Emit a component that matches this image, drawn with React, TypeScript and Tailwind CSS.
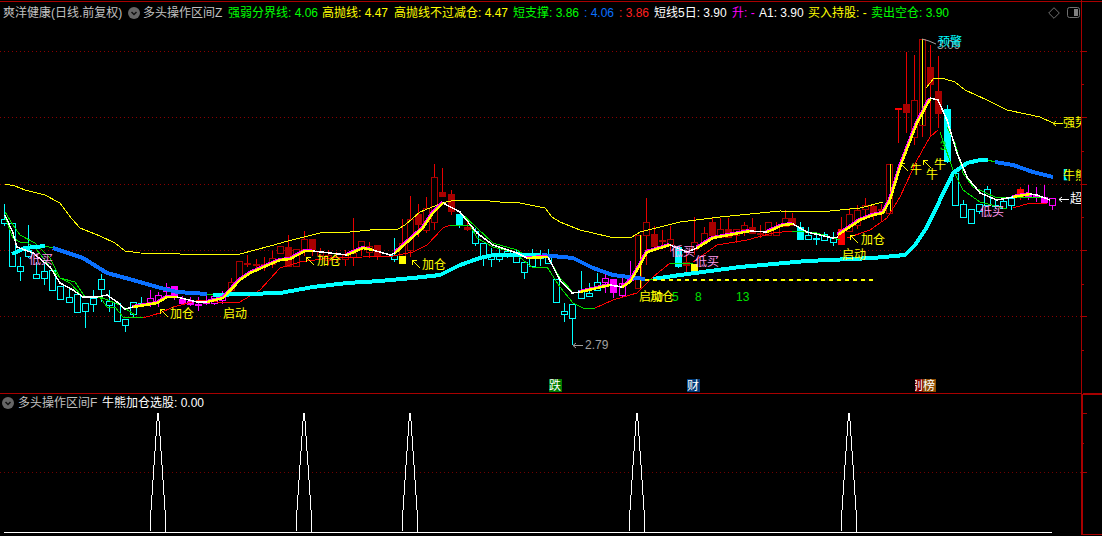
type Candle = [number, number, number, number, number, string];
type Pt = [number, number];

// x, body top, body bottom, high, low, kind (c/C cyan, r/R red, m/M magenta, b bright red)
const candles: Candle[] = [
  [4, 219, 223, 204, 226, "c"], [12, 223, 266, 223, 267, "c"], [20, 266, 271, 257, 281, "c"], [28, 250, 256, 225, 258, "c"],
  [36, 274, 278, 262, 279, "c"], [44, 271, 278, 263, 285, "c"], [52, 270, 290, 270, 291, "c"], [60, 286, 299, 286, 300, "c"],
  [69, 297, 302, 288, 303, "c"], [77, 294, 312, 294, 312, "c"], [85, 303, 311, 303, 328, "c"], [93, 298, 304, 290, 312, "c"],
  [101, 279, 289, 274, 302, "c"], [109, 301, 305, 290, 312, "c"], [117, 303, 321, 303, 321, "c"], [125, 319, 325, 319, 332, "c"],
  [133, 302, 314, 302, 318, "c"], [141, 303, 304, 297, 307, "c"], [150, 298, 302, 290, 307, "m"], [158, 295, 301, 292, 307, "m"],
  [166, 287, 291, 283, 298, "m"], [174, 286, 296, 286, 300, "M"], [182, 299, 303, 296, 305, "M"], [190, 301, 304, 297, 306, "M"],
  [198, 304, 305, 297, 311, "m"], [206, 301, 303, 293, 305, "m"], [214, 296, 303, 294, 305, "m"], [222, 295, 300, 291, 304, "m"],
  [231, 282, 290, 278, 296, "r"], [239, 261, 279, 261, 280, "r"], [247, 263, 264, 255, 267, "r"], [256, 264, 265, 259, 271, "r"],
  [264, 264, 265, 257, 271, "r"], [272, 258, 264, 251, 268, "r"], [280, 246, 253, 246, 254, "r"], [288, 247, 266, 235, 266, "R"],
  [296, 249, 266, 249, 266, "r"], [304, 239, 249, 231, 256, "r"], [312, 239, 249, 239, 256, "R"], [320, 252, 255, 248, 259, "r"],
  [328, 255, 260, 250, 265, "r"], [336, 257, 259, 252, 262, "r"], [345, 255, 259, 250, 266, "r"], [353, 253, 257, 218, 266, "r"],
  [361, 241, 248, 241, 256, "r"], [369, 246, 252, 242, 258, "r"], [377, 245, 255, 245, 260, "R"], [394, 255, 259, 238, 262, "c"],
  [402, 243, 256, 219, 256, "r"], [410, 219, 250, 196, 257, "r"], [418, 214, 224, 204, 237, "R"], [426, 208, 230, 197, 233, "r"],
  [434, 177, 222, 164, 230, "r"], [442, 192, 196, 168, 197, "R"], [451, 194, 211, 190, 215, "R"], [459, 214, 225, 214, 228, "C"],
  [467, 227, 229, 222, 231, "R"], [475, 231, 243, 228, 246, "c"], [483, 243, 258, 243, 266, "c"], [491, 255, 259, 248, 267, "c"],
  [499, 253, 259, 249, 262, "c"], [507, 251, 254, 250, 258, "c"], [516, 252, 262, 250, 263, "c"], [524, 262, 272, 262, 279, "c"],
  [532, 257, 266, 249, 267, "c"], [540, 257, 258, 250, 266, "c"], [548, 254, 263, 249, 264, "c"], [556, 279, 302, 279, 302, "c"],
  [564, 311, 314, 303, 322, "c"], [572, 304, 318, 304, 345, "c"], [581, 290, 298, 271, 298, "c"], [589, 293, 296, 283, 296, "c"],
  [597, 282, 290, 273, 291, "c"], [605, 278, 282, 273, 293, "m"], [613, 279, 292, 279, 298, "M"], [622, 283, 295, 277, 298, "m"],
  [630, 275, 280, 261, 281, "M"], [638, 235, 288, 235, 288, "r"], [646, 222, 235, 198, 265, "r"], [654, 234, 246, 226, 250, "R"],
  [662, 240, 241, 230, 248, "r"], [670, 239, 244, 226, 252, "r"], [678, 247, 266, 247, 268, "C"], [686, 262, 265, 253, 272, "R"],
  [694, 242, 249, 217, 255, "r"], [704, 233, 242, 227, 245, "r"], [712, 222, 235, 218, 235, "R"], [720, 229, 237, 218, 238, "r"],
  [728, 229, 237, 218, 238, "R"], [736, 229, 235, 229, 243, "r"], [744, 225, 229, 222, 236, "r"], [752, 227, 233, 218, 233, "R"],
  [760, 233, 234, 225, 238, "r"], [768, 222, 235, 222, 236, "r"], [776, 227, 235, 222, 235, "r"], [785, 218, 226, 210, 226, "r"],
  [792, 218, 225, 213, 226, "R"], [800, 227, 239, 222, 239, "C"], [808, 235, 239, 227, 240, "c"], [816, 238, 239, 232, 245, "c"],
  [824, 234, 240, 232, 241, "c"], [833, 238, 242, 232, 246, "c"], [841, 229, 244, 217, 244, "b"], [849, 214, 231, 208, 231, "r"],
  [857, 210, 225, 205, 229, "r"], [865, 205, 209, 198, 215, "r"], [873, 206, 213, 204, 220, "R"], [881, 209, 210, 204, 222, "r"],
  [889, 164, 213, 164, 213, "r"], [898, 108, 109, 108, 143, "b"], [906, 104, 112, 52, 133, "R"], [914, 100, 137, 55, 145, "r"],
  [922, 39, 125, 39, 137, "r"], [930, 67, 84, 45, 137, "R"], [938, 91, 113, 56, 128, "R"], [947, 109, 161, 105, 163, "C"],
  [955, 173, 205, 173, 205, "c"], [963, 204, 217, 200, 217, "c"], [971, 209, 223, 209, 223, "c"], [979, 204, 211, 204, 214, "c"],
  [987, 189, 205, 186, 205, "c"], [995, 205, 206, 199, 209, "c"], [1003, 201, 208, 197, 208, "c"], [1011, 198, 205, 196, 210, "c"],
  [1020, 189, 196, 187, 200, "b"], [1028, 195, 196, 185, 200, "m"], [1036, 195, 196, 187, 202, "m"], [1044, 197, 202, 185, 202, "M"],
  [1052, 198, 205, 198, 210, "m"],
];

const upperBands: Pt[][] = [
  [
    [5, 184], [15, 186], [25, 190], [45, 195], [60, 203], [72, 219], [80, 228], [100, 236], [115, 243], [125, 251], [140, 253],
    [180, 254], [240, 254], [270, 246], [288, 241], [300, 238], [320, 233], [350, 232], [370, 230], [398, 229], [405, 225],
    [420, 212], [442, 203], [455, 200], [480, 200], [500, 202], [520, 203], [545, 208], [552, 217], [560, 222], [580, 230],
    [610, 237], [632, 237], [640, 232], [660, 227], [680, 222], [720, 217], [780, 211], [820, 212], [860, 208], [883, 202],
  ],
  [[926, 88], [934, 78], [945, 79], [955, 82], [965, 90], [987, 100], [1007, 110], [1040, 117], [1053, 123]],
];

const thickSegs: { color: string; pts: Pt[] }[] = [
  { color: "#00ffff", pts: [[12, 254], [25, 248], [45, 246]] },
  { color: "#0a70ff", pts: [[53, 248], [83, 258], [107, 273], [133, 280], [157, 287], [177, 292], [207, 294]] },
  { color: "#00ffff", pts: [[213, 295], [280, 293], [313, 287], [347, 283], [380, 281], [413, 278], [440, 275], [460, 265], [480, 258], [493, 255], [540, 255]] },
  { color: "#0a70ff", pts: [[542, 255], [573, 258], [593, 268], [613, 275], [637, 278], [645, 279]] },
  { color: "#00ffff", pts: [[653, 279], [680, 275], [740, 267], [807, 261], [873, 258], [905, 255], [915, 245], [927, 227], [940, 200], [953, 173], [967, 163], [980, 160], [988, 160]] },
  { color: "#0a70ff", pts: [[995, 162], [1013, 165], [1033, 172], [1053, 177]] },
];

const redSegs: Pt[][] = [
  [[143, 318], [160, 313], [173, 307], [200, 300], [225, 303], [240, 302], [260, 290], [280, 268], [300, 262], [330, 258], [363, 257], [393, 256], [413, 252], [427, 245], [443, 228], [450, 225]],
  [[595, 308], [613, 300], [637, 293], [653, 277], [670, 263]],
  [[693, 262], [717, 245], [747, 240], [773, 233], [792, 231]],
  [[847, 238], [870, 230], [887, 218], [900, 197], [917, 160], [930, 137], [938, 130]],
  [[1013, 208], [1030, 203], [1047, 203]],
];

const greenSegs: Pt[][] = [
  [[5, 217], [13, 238], [20, 242], [28, 243], [37, 250], [50, 267], [60, 278], [70, 283], [83, 297], [100, 297], [107, 307], [115, 307], [123, 317], [143, 318]],
  [[450, 225], [470, 225], [477, 238], [493, 247], [513, 252], [533, 268], [547, 267], [560, 287], [573, 303], [583, 308], [595, 308]],
  [[670, 263], [693, 263]],
  [[792, 231], [817, 233], [840, 240]],
  [[940, 132], [953, 170], [963, 190], [980, 202], [1007, 209]],
  [[5, 212], [13, 225], [20, 235], [35, 243], [50, 258], [60, 278], [75, 282], [85, 297], [100, 297], [120, 305], [135, 315]],
  [[460, 212], [477, 228], [493, 243], [517, 250], [530, 258], [548, 257], [560, 278], [572, 291]],
  [[947, 127], [955, 143], [963, 173], [973, 187], [997, 198], [1047, 197]],
  [[45, 246], [53, 248]],
  [[207, 294], [213, 295]],
  [[645, 279], [653, 279]],
  [[988, 160], [995, 162]],
];

const whiteSegs: Pt[][] = [
  [[5, 215], [13, 233], [17, 247], [33, 253], [50, 267], [60, 283], [73, 290], [83, 297], [97, 297], [107, 295], [117, 302], [125, 309], [133, 307]],
  [[177, 297], [197, 302], [207, 302]],
  [[313, 251], [347, 255]],
  [[373, 250], [390, 255], [395, 253]],
  [[443, 203], [460, 212], [477, 233], [493, 245], [517, 253], [527, 258]],
  [[548, 257], [560, 280], [572, 293], [580, 292]],
  [[610, 285], [622, 287]],
  [[670, 245], [687, 252], [697, 248]],
  [[750, 231], [767, 232]],
  [[793, 224], [807, 232], [833, 238], [838, 237]],
  [[930, 98], [938, 100], [947, 120], [957, 153], [967, 177], [980, 193], [997, 200], [1013, 197]],
  [[1030, 194], [1037, 195], [1050, 200]],
];

const yellowSegs: Pt[][] = [
  [[133, 307], [157, 303], [167, 297], [177, 297]],
  [[207, 302], [223, 298], [240, 280], [250, 273], [280, 260], [290, 259], [305, 251], [313, 251]],
  [[347, 255], [363, 248], [373, 250]],
  [[395, 253], [423, 228], [433, 213], [443, 203]],
  [[527, 258], [548, 257]],
  [[580, 292], [597, 288], [610, 285]],
  [[622, 287], [630, 282], [640, 265], [647, 252], [670, 245]],
  [[697, 248], [713, 238], [750, 231]],
  [[767, 232], [783, 225], [793, 224]],
  [[838, 235], [860, 220], [873, 215], [883, 213], [890, 200], [900, 167], [917, 123], [930, 99]],
  [[1013, 197], [1030, 194]],
];

const labels: { x: number; y: number; t: string; c: string }[] = [
  { x: 29, y: 264, t: "低买", c: "#ff99ee" },
  { x: 170, y: 318, t: "加仓", c: "#ffff00" },
  { x: 223, y: 318, t: "启动", c: "#ffff00" },
  { x: 317, y: 265, t: "加仓", c: "#ffff00" },
  { x: 422, y: 269, t: "加仓", c: "#ffff00" },
  { x: 639, y: 301, t: "启动", c: "#ffff00" },
  { x: 650, y: 301, t: "加仓", c: "#ffff00" },
  { x: 672, y: 301, t: "5", c: "#00e000" },
  { x: 695, y: 301, t: "8", c: "#00e000" },
  { x: 736, y: 301, t: "13", c: "#00e000" },
  { x: 585, y: 349, t: "2.79", c: "#a0a0a0" },
  { x: 671, y: 256, t: "低买", c: "#ff99ee" },
  { x: 695, y: 266, t: "低买", c: "#ff99ee" },
  { x: 861, y: 244, t: "加仓", c: "#ffff00" },
  { x: 842, y: 259, t: "启动", c: "#ffff00" },
  { x: 937, y: 49, t: "3.09", c: "#a0a0a0" },
  { x: 938, y: 46, t: "预警", c: "#00ffff" },
  { x: 910, y: 174, t: "牛", c: "#ffff00" },
  { x: 934, y: 169, t: "牛", c: "#ffff00" },
  { x: 926, y: 179, t: "牛", c: "#ffff00" },
  { x: 940, y: 150, t: "3", c: "#00e000" },
  { x: 1063, y: 127, t: "强势", c: "#ffff00" },
  { x: 1056, y: 180, t: "【", c: "#00ffff" },
  { x: 1063, y: 180, t: "牛熊", c: "#ffff00" },
  { x: 1070, y: 203, t: "超", c: "#ffffff" },
  { x: 980, y: 216, t: "低买", c: "#ff99ee" },
];

// small arrows next to the labels
const diagArrows: Pt[] = [[160, 309], [306, 257], [412, 260], [850, 235], [900, 163], [923, 160]];
const leftArrows: { x: number; w: number; y: number; c: string }[] = [
  { x: 573, w: 10, y: 345, c: "#a0a0a0" },
  { x: 1053, w: 10, y: 123, c: "#ffff00" },
  { x: 1059, w: 10, y: 199, c: "#ffffff" },
];

const markers = [
  { x: 549, w: 13, t: "跌", bg: "#007a00", dx: 0 },
  { x: 687, w: 13, t: "财", bg: "#003a78", dx: 0 },
  { x: 915, w: 8, t: "别", bg: "#800000", dx: -4 },
  { x: 923, w: 13, t: "榜", bg: "#8a4a00", dx: 0 },
];

const peaks = [158, 304, 410, 637, 849];
const stepYs = [532, 510, 495, 480, 465, 451, 436, 421];

const FONT = '"Liberation Sans", "Noto Sans CJK SC", "DejaVu Sans", sans-serif';

function toPoints(pts: Pt[]) {
  return pts.map((p) => p.join(",")).join(" ");
}

function peakPath(cx: number) {
  const left = stepYs.map((y, i) => `${cx - 8 + i},${y}`);
  const right = [...stepYs].reverse().map((y, i) => `${cx + 1 + i},${y}`);
  return [...left, `${cx},413`, ...right, `${cx + 8},532`].join(" ");
}

function CandleMark({ c }: { c: Candle }) {
  const [x, top, bottom, high, low, kind] = c;
  const cyan = kind === "c" || kind === "C";
  const mag = kind === "m" || kind === "M";
  const stroke = cyan ? "#00ffff" : mag ? "#ff00ff" : kind === "b" ? "#ff0000" : "#a80000";
  const wick = cyan ? "#00ffff" : mag ? "#ff00ff" : "#e80000";
  const filled = kind === "C" || kind === "M" || kind === "R" || kind === "b";
  return (
    <g>
      <line x1={x + 0.5} y1={high} x2={x + 0.5} y2={low} stroke={wick} />
      <rect
        x={x - 3 + 0.5}
        y={top + 0.5}
        width={6}
        height={Math.max(bottom - top, 1)}
        fill={filled ? stroke : "#000000"}
        stroke={stroke}
      />
    </g>
  );
}

function Line({ pts, color, width }: { pts: Pt[]; color: string; width: number }) {
  return <polyline points={toPoints(pts)} fill="none" stroke={color} strokeWidth={width} shapeRendering="crispEdges" />;
}

function StatusDot() {
  return (
    <svg width="12" height="12" viewBox="0 0 12 12" className="shrink-0">
      <circle cx="6" cy="6" r="6" fill="#666666" />
      <path d="M3.5 5 L6 7.5 L8.5 5" fill="none" stroke="#111111" strokeWidth="1.5" />
    </svg>
  );
}

function Header() {
  return (
    <div className="h-[22px] mt-px border-t border-[#a80000] flex items-center pl-[3px] text-[12px] leading-none whitespace-nowrap shrink-0">
      <span className="w-[125px] shrink-0 text-[#c0c0c0]">爽洋健康(日线.前复权)</span>
      <div className="w-[15px] shrink-0"><StatusDot /></div>
      <span className="w-[85px] shrink-0 text-[#c0c0c0]">多头操作区间Z</span>
      <span className="w-[94px] shrink-0 text-[#00ff00]">强弱分界线: 4.06</span>
      <span className="w-[72px] shrink-0 text-[#ffff00]">高抛线: 4.47</span>
      <span className="w-[119px] shrink-0 text-[#ffff00]">高抛线不过减仓: 4.47</span>
      <span className="w-[71px] shrink-0 text-[#00ff00]">短支撑: 3.86</span>
      <span className="w-[35px] shrink-0 text-[#0a70ff]">: 4.06</span>
      <span className="w-[35px] shrink-0 text-[#ff2020]">: 3.86</span>
      <span className="w-[78px] shrink-0 text-white">短线5日: 3.90</span>
      <span className="w-[27px] shrink-0 text-[#ff00ff]">升: -</span>
      <span className="w-[49px] shrink-0 text-white">A1: 3.90</span>
      <span className="w-[63px] shrink-0 text-[#ffff00]">买入持股: -</span>
      <span className="w-[100px] shrink-0 text-[#00ff00]">卖出空仓: 3.90</span>
      <div className="flex items-center gap-[7px] ml-[77px]">
        <svg width="12" height="12" viewBox="0 0 12 12">
          <path d="M6 0.7 L11.3 6 L6 11.3 L0.7 6 Z" fill="none" stroke="#707070" />
        </svg>
        <svg width="13" height="11" viewBox="0 0 13 11">
          <rect x="0.5" y="0.5" width="12" height="10" rx="2" fill="none" stroke="#707070" />
          <rect x="7" y="2" width="4" height="7" fill="#808080" />
        </svg>
      </div>
    </div>
  );
}

function MainChart() {
  return (
    <svg width="1081" height="370" viewBox="0 23 1081 370" className="block" fontFamily={FONT} fontSize="12">
      {[51, 117, 184, 250, 316].map((y) => (
        <line key={y} x1="0" x2="1081" y1={y + 0.5} y2={y + 0.5} stroke="#8a0000" strokeDasharray="1 3" />
      ))}
      {candles.map((c) => (
        <CandleMark key={c[0]} c={c} />
      ))}
      <g shapeRendering="crispEdges">
        <rect x="399" y="256" width="7" height="8" fill="#ffff00" />
        <rect x="691" y="264" width="7" height="8" fill="#ffff00" />
        <line x1="890.5" x2="890.5" y1="164" y2="213" stroke="#ffff00" />
        <line x1="922.5" x2="922.5" y1="39" y2="125" stroke="#ffff00" />
        <line x1="640.5" x2="640.5" y1="235" y2="288" stroke="#ffff00" />
      </g>
      {upperBands.map((s, i) => (
        <Line key={i} pts={s} color="#ffff00" width={1} />
      ))}
      {redSegs.map((s, i) => (
        <Line key={i} pts={s} color="#ff0000" width={1} />
      ))}
      {greenSegs.map((s, i) => (
        <Line key={i} pts={s} color="#00e000" width={1} />
      ))}
      {thickSegs.map((s, i) => (
        <Line key={i} pts={s.pts} color={s.color} width={4} />
      ))}
      <line x1="645" x2="876" y1="280" y2="280" stroke="#ffff00" strokeWidth="2" strokeDasharray="4 4" shapeRendering="crispEdges" />
      {yellowSegs.map((s, i) => (
        <g key={i} transform="translate(-1 -1)">
          <Line pts={s} color="#ff00ff" width={2} />
        </g>
      ))}
      {whiteSegs.map((s, i) => (
        <Line key={i} pts={s} color="#ffffff" width={1.5} />
      ))}
      {yellowSegs.map((s, i) => (
        <Line key={i} pts={s} color="#ffff00" width={2.5} />
      ))}
      <polyline points="922,39 929,41 936,44" fill="none" stroke="#a0a0a0" />
      {diagArrows.map(([x, y]) => (
        <path key={x} d={`M${x + 8} ${y + 8} L${x} ${y} M${x} ${y} L${x + 5} ${y} M${x} ${y} L${x} ${y + 5}`} fill="none" stroke="#ffff00" shapeRendering="crispEdges" />
      ))}
      {leftArrows.map((a) => (
        <path key={a.x} d={`M${a.x + a.w} ${a.y + 0.5} L${a.x} ${a.y + 0.5} M${a.x + 3} ${a.y - 2} L${a.x} ${a.y + 0.5} L${a.x + 3} ${a.y + 3}`} fill="none" stroke={a.c} />
      ))}
      {labels.map((l, i) => (
        <text key={i} x={l.x} y={l.y} fill={l.c}>
          {l.t}
        </text>
      ))}
      {markers.map((m) => (
        <svg key={m.t} x={m.x} y={379} width={m.w} height={13}>
          <rect width={m.w} height={13} fill={m.bg} />
          <text x={m.dx} y={11} fill="#ffffff">
            {m.t}
          </text>
        </svg>
      ))}
    </svg>
  );
}

function LowerPanel() {
  return (
    <div className="flex-1 flex flex-col">
      <div className="h-[18px] flex items-center pl-[2px] text-[12px] leading-none whitespace-nowrap shrink-0">
        <div className="w-[16px] shrink-0"><StatusDot /></div>
        <span className="w-[84px] shrink-0 text-[#c0c0c0]">多头操作区间F</span>
        <span className="text-white">牛熊加仓选股: 0.00</span>
      </div>
      <svg width="1081" height="122" viewBox="0 412 1081 122" className="block">
        <line x1="0" x2="1081" y1="472.5" y2="472.5" stroke="#700000" strokeDasharray="1 3" />
        <line x1="4" x2="1052" y1="532.5" y2="532.5" stroke="#ffffff" shapeRendering="crispEdges" />
        {peaks.map((p) => (
          <polyline key={p} points={peakPath(p)} fill="#000000" stroke="#ffffff" shapeRendering="crispEdges" />
        ))}
      </svg>
    </div>
  );
}

function RightAxis() {
  const major = [51, 117, 184, 250, 316];
  const minor = [84, 151, 217, 284, 350];
  return (
    <svg width="21" height="536" className="block shrink-0" shapeRendering="crispEdges">
      <line x1="0.5" x2="0.5" y1="0" y2="394" stroke="#a80000" />
      <line x1="1" x2="1" y1="394" y2="534" stroke="#a80000" strokeWidth="2" />
      <line x1="0" x2="21" y1="1.5" y2="1.5" stroke="#a80000" />
      <line x1="2" x2="21" y1="394" y2="394" stroke="#a80000" strokeWidth="2" />
      <line x1="0" x2="21" y1="534" y2="534" stroke="#a80000" />
      {major.map((y) => (
        <line key={y} x1="0" x2="6" y1={y + 0.5} y2={y + 0.5} stroke="#a80000" />
      ))}
      {minor.map((y) => (
        <line key={y} x1="0" x2="3" y1={y + 0.5} y2={y + 0.5} stroke="#a80000" />
      ))}
      <line x1="0" x2="6" y1="413.5" y2="413.5" stroke="#a80000" />
      <line x1="0" x2="3" y1="443.5" y2="443.5" stroke="#a80000" />
      <line x1="0" x2="6" y1="472.5" y2="472.5" stroke="#a80000" />
    </svg>
  );
}

export default function App() {
  return (
    <div className="w-[1102px] h-[536px] bg-black overflow-hidden flex font-['Liberation_Sans','Noto_Sans_CJK_SC',sans-serif]">
      <div className="w-[1081px] shrink-0 flex flex-col">
        <div className="h-[394px] shrink-0 flex flex-col border-b border-[#a80000]">
          <Header />
          <MainChart />
        </div>
        <LowerPanel />
      </div>
      <RightAxis />
    </div>
  );
}
